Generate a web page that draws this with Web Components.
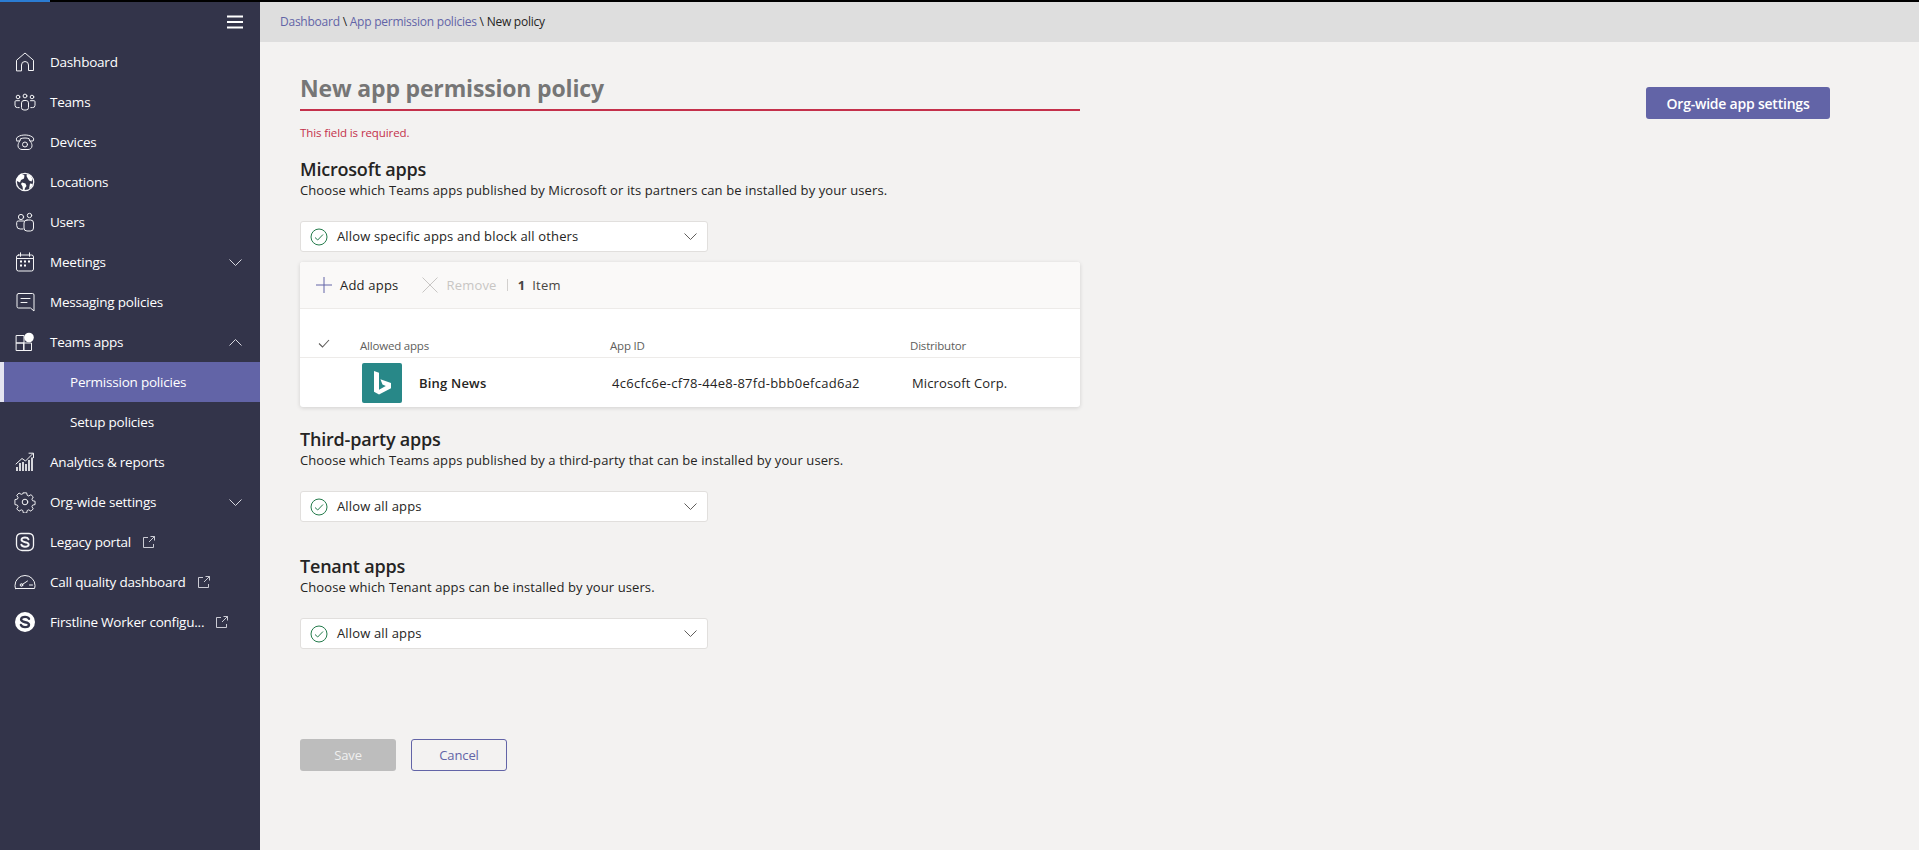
<!DOCTYPE html>
<html lang="en"><head><meta charset="utf-8"><title>New app permission policy</title>
<style>
html,body{margin:0;height:100%;overflow:hidden;background:#f3f2f1}
body{font-family:"Open Sans","Noto Sans",sans-serif;color:#252423}
</style></head><body>
<admin-app>
  <side-nav slot="nav">
    <nav-item label="Dashboard" icon="home"></nav-item>
    <nav-item label="Teams" icon="teams"></nav-item>
    <nav-item label="Devices" icon="phone"></nav-item>
    <nav-item label="Locations" icon="globe"></nav-item>
    <nav-item label="Users" icon="users"></nav-item>
    <nav-item label="Meetings" icon="calendar" chevron="down"></nav-item>
    <nav-item label="Messaging policies" icon="chat"></nav-item>
    <nav-item label="Teams apps" icon="apps" chevron="up"></nav-item>
    <nav-item label="Permission policies" sub active></nav-item>
    <nav-item label="Setup policies" sub></nav-item>
    <nav-item label="Analytics &amp; reports" icon="chart"></nav-item>
    <nav-item label="Org-wide settings" icon="gear" chevron="down"></nav-item>
    <nav-item label="Legacy portal" icon="skype" external></nav-item>
    <nav-item label="Call quality dashboard" icon="gauge" external></nav-item>
    <nav-item label="Firstline Worker configu..." icon="skypefill" external></nav-item>
  </side-nav>
  <bread-crumb slot="crumb"></bread-crumb>
  <policy-form slot="main"></policy-form>
</admin-app>
<script>
const ICONS={
home:'<path d="M1.500 18.500V8.300L10 1l8.500 7.300v10.200h-5v-5.500a3.500 3.500 0 0 0-7 0v5.500z"/>',
teams:'<circle cx="4" cy="4.500" r="1.800"/><circle cx="11" cy="3.500" r="1.900"/><circle cx="18" cy="4.500" r="1.800"/><rect x="7.500" y="8" width="7" height="9.500" rx="2.400"/><path d="M5.500 8.200H2a1 1 0 0 0-1 1v3.600a2.400 2.400 0 0 0 2.600 2.300h1.600M16.500 8.200H20a1 1 0 0 1 1 1v3.600a2.400 2.400 0 0 1-2.600 2.300h-1.600"/>',
phone:'<path d="M1.500 8c-.6-1.500.3-2.500 1.600-3.300C5 3.500 7.500 3 10 3s5 .5 6.900 1.700c1.300.8 2.200 1.800 1.600 3.300l-.4 1h-3.400l-.6-2.300C13 6.200 11.500 6 10 6s-3 .2-4.500.7L4.900 9H1.900z"/><path d="M4.500 9.500c-1 1.300-1.500 2.800-1.500 4.300C3 16.200 5 17.500 7 17.500h6c2 0 4-1.300 4-3.700 0-1.500-.5-3-1.500-4.300"/><circle cx="10" cy="12.500" r="2.500"/>',
globe:'<circle cx="10" cy="10" r="8.700" stroke-width="1.300"/><path fill="#fff" stroke="none" d="M6 1.500 9.500 3.500l-.5 3-3 1.500-1 2.500-3-1.500-.5-1.500C2.500 5 4 2.800 6 1.500zM7 10.500l3.500 1 1 2.500-1.500 2-.5 2.500-1.500-.5-.5-3.500-1.500-2.500zM12 2l3.500 1.500 2 3.500-1 2.500-2.500-1-1.500-2.500-1-2zM15 11.500l2.800.5-1.300 3-2.500 2z"/>',
users:'<circle cx="6" cy="5" r="2.600"/><circle cx="14.500" cy="3.500" r="2.200"/><path d="M9 9H3.200a1.500 1.500 0 0 0-1.500 1.500v3A3.500 3.500 0 0 0 5.200 17H8"/><rect x="9" y="8" width="9.500" height="11" rx="3"/>',
calendar:'<rect x="1.500" y="3" width="17" height="16" rx="2"/><path d="M5.500 .8v3.500M14.500 .8v3.500M1.500 6.500h17"/><g fill="#fff" stroke="none"><rect x="5" y="8.500" width="2" height="2"/><rect x="9" y="8.500" width="2" height="2"/><rect x="13" y="8.500" width="2" height="2"/><rect x="5" y="12.500" width="2" height="2"/><rect x="9" y="12.500" width="2" height="2"/></g>',
chat:'<path d="M3.500 1.500h14A1.500 1.500 0 0 1 19 3v16l-3.500-3H3.500A1.500 1.500 0 0 1 2 14.500V3a1.500 1.500 0 0 1 1.500-1.500z"/><path d="M6 6.500h9M6 10.500h6"/>',
apps:'<path d="M1.500 3.500h7.500v7.500H1.500zM1.500 11h7.500v7.500H1.500zM9 11h7.500v7.500H9z"/><circle cx="14" cy="5.500" r="4.800" fill="#fff" stroke="none"/>',
chart:'<path d="M1 12 7 6.500l3.500 2.500L18 1.500M14 1.200h4.500v4.500"/><path d="M2 19v-4M5 19v-8M8 19v-9M11 19v-7M14 19V8M17 19V5.500" stroke-width="1.700" stroke-linecap="butt"/>',
gear:'<path d="M8.300 1.500h3.400l.6 2.600 1.600.7 2.300-1.400 2.400 2.400-1.400 2.300.7 1.600 2.600.6v3.400l-2.600.6-.7 1.600 1.400 2.300-2.400 2.400-2.300-1.400-1.600.7-.6 2.600H8.300l-.6-2.600-1.600-.7-2.300 1.400-2.400-2.400 1.400-2.300-.7-1.600-2.600-.6V8.600l2.600-.6.700-1.600-1.400-2.300 2.400-2.400 2.300 1.400 1.600-.7z" transform="translate(.4 -.6) scale(.96)"/><circle cx="10" cy="10" r="2.800"/>',
skype:'<path d="M6 1.500h8A4.800 4.800 0 0 1 18.500 6v7.500a5 5 0 0 1-5 5H7A5.500 5.500 0 0 1 1.500 13V6A4.800 4.800 0 0 1 6 1.500z" stroke-width="1.300"/><path d="M13.500 7.300C13 6 11.700 5.500 10 5.500c-2 0-3.500.9-3.500 2.300 0 3.300 7.200 1.600 7.200 4.700 0 1.300-1.500 2.200-3.700 2.200-1.900 0-3.200-.7-3.700-2" stroke-width="1.900"/>',
gauge:'<path d="M1.500 15.500h19c.3-1 .5-2 .5-3a10 10 0 0 0-20 0c0 1 .2 2 .5 3z"/><path d="M7.500 12l6-4"/><circle cx="7.500" cy="12" r="1.300"/><path d="M15.500 12h3"/>',
skypefill:'<circle cx="10" cy="10" r="10" fill="#fff" stroke="none"/><path d="M14 6.800C13.400 5.400 12 4.900 10 4.900c-2.300 0-3.900 1-3.900 2.700 0 3.600 7.900 1.800 7.900 5.100 0 1.500-1.700 2.400-4 2.400-2.100 0-3.600-.8-4.100-2.200" stroke="#33344a" stroke-width="2.400"/>'
};
const VIEW={teams:'0 -1.500 22 22',gauge:'0 -2 22 22'};
const tpl=(html)=>{const t=document.createElement('template');t.innerHTML=html;return t};
const define=(name,html)=>{const t=tpl(html);customElements.define(name,class extends HTMLElement{
  connectedCallback(){if(this.shadowRoot)return;this.attachShadow({mode:'open'}).appendChild(t.content.cloneNode(true))}
})};

define('admin-app',`<style>
:host{display:grid;grid-template-columns:260px 1fr;grid-template-rows:2px 40px 1fr;height:850px;background:#f3f2f1}
.top{grid-column:1/3;background:#000;display:flex}.top i{width:50px;background:#2b7cd3}
.nav{grid-row:2/4;background:#33344a;min-width:0}
.crumb{background:#dedede;min-width:0}
.main{min-width:0;overflow:hidden}
</style><div class="top"><i></i></div><div class="nav"><slot name="nav"></slot></div><div class="crumb"><slot name="crumb"></slot></div><div class="main"><slot name="main"></slot></div>`);

define('side-nav',`<style>
:host{display:block}
.burger{height:40px;display:flex;justify-content:flex-end;align-items:center;padding-right:17px}
svg{display:block}
</style><div class="burger"><svg width="16" height="14" viewBox="0 0 16 14" aria-label="Menu"><path d="M0 1.500h16M0 7h16M0 12.500h16" stroke="#fff" stroke-width="2"/></svg></div><slot></slot>`);

customElements.define('nav-item',class extends HTMLElement{
  connectedCallback(){
    if(this.shadowRoot)return;
    const r=this.attachShadow({mode:'open'});
    const a=n=>this.getAttribute(n);
    const ic=a('icon');
    const chev=a('chevron');
    r.innerHTML=`<style>
:host{display:flex;align-items:center;height:40px;box-sizing:border-box;color:#fff;font:13.500px/20px "Open Sans","Noto Sans",sans-serif;letter-spacing:-.22px;white-space:nowrap}
:host([sub]){padding-left:70px}
:host([active]){background:#6264a7;box-shadow:inset 4px 0 0 #e4e4f1}
.ic{width:50px;padding-left:14px;box-sizing:border-box;flex:none;display:flex}
.ic svg{display:block}
.ext{margin-left:12px;display:block}
.ch{margin-left:auto;margin-right:18px;display:block}
</style>${ic?`<span class="ic"><svg width="22" height="22" viewBox="${VIEW[ic]||'-1 -1 22 22'}" fill="none" stroke="#f4f4f6" stroke-width="1" stroke-linejoin="round" stroke-linecap="round">${ICONS[ic]}</svg></span>`:''}<span>${a('label').replace(/&/g,'&amp;')}</span>${a('external')!==null?'<svg class="ext" width="12" height="12" viewBox="0 0 12 12" fill="none" stroke="#dcdce4" stroke-width=".9"><path d="M5 1.500H.5v10h10V8M6 6l5.500-5.500M7.500.5h4v4"/></svg>':''}${chev?`<svg class="ch" width="13" height="7" viewBox="0 0 13 7" fill="none" stroke="#d8d8e0" stroke-width="1"><path d="${chev==='down'?'M.5.500l6 6 6-6':'M.5 6.500l6-6 6 6'}"/></svg>`:''}`;
  }
});

define('bread-crumb',`<style>
:host{display:flex;align-items:center;height:100%;padding-left:20px;font:12px/16px "Open Sans","Noto Sans",sans-serif;letter-spacing:-.24px;color:#252423;white-space:pre}
a{color:#6264a7}
</style><a>Dashboard</a> \\ <a>App permission policies</a> \\ New policy`);

define('pick-list',`<style>
:host{display:flex;align-items:center;width:408px;height:31px;box-sizing:border-box;background:#fff;border:1px solid #e1dfdd;border-radius:3px;padding:0 10px 0 9px;font:13px/18px "Open Sans","Noto Sans",sans-serif;letter-spacing:.15px;color:#252423}
svg{display:block;flex:none}
span{margin:0 0 2px 9px;flex:1}
</style><svg width="18" height="18" viewBox="0 0 18 18" fill="none" stroke="#237b4b" stroke-width="1"><circle cx="9" cy="9" r="8"/><path d="M5 9.500l2.700 2.500L13 6.500"/></svg><span><slot></slot></span><svg width="13" height="7" viewBox="0 0 13 7" fill="none" stroke="#605e5c" stroke-width="1"><path d="M.5.500l6 6 6-6"/></svg>`);

define('policy-section',`<style>
:host{display:block;font-family:"Open Sans","Noto Sans",sans-serif}
h2{margin:0;font-size:18px;line-height:24px;font-weight:600;letter-spacing:-.2px;color:#252423}
p{margin:0;font-size:13px;line-height:18px;letter-spacing:.1px;color:#252423}
.b{margin-top:22px}
</style><h2><slot name="h"></slot></h2><p><slot name="d"></slot></p><div class="b"><slot></slot></div>`);

define('apps-table',`<style>
:host{display:block;width:780px;margin-top:10px;background:#fff;border-radius:3px;box-shadow:0 1px 4px rgba(0,0,0,.14);font:13px/18px "Open Sans","Noto Sans",sans-serif;letter-spacing:.2px;color:#252423}
.bar{height:47px;box-sizing:border-box;background:#faf9f8;border-bottom:1px solid #edebe9;border-radius:3px 3px 0 0;display:flex;align-items:center;padding-left:16px}
.bar svg{display:block;flex:none}
.add{margin-left:8px}.rem{margin-left:8px;color:#c8c6c4}.sep{width:1px;height:12px;background:#d2d0ce;margin:0 10px}
.x{margin-left:24px}
.count{color:#484644;display:flex;gap:7px}.count b{font-weight:700}
.row{display:grid;grid-template-columns:60px 250px 300px 1fr;align-items:center}
.head{height:49px;box-sizing:border-box;padding-bottom:1px;align-items:end;border-bottom:1px solid #edebe9;font-size:11.500px;line-height:20px;letter-spacing:-.2px;color:#605e5c}
.head svg{display:block;margin:0 0 8px 18px}
.body{height:49px}
.tile{grid-column:2;display:flex;align-items:center;gap:17px;font-weight:600;margin-left:2px}
.tile svg{display:block;flex:none}
.id{padding-left:2px;letter-spacing:.27px}.ms{padding-left:2px;letter-spacing:.13px}
</style><div class="bar"><svg width="16" height="16" viewBox="0 0 16 16" fill="none" stroke="#6264a7" stroke-width="1"><path d="M0 8h16M8 0v16"/></svg><span class="add">Add apps</span><svg class="x" width="16" height="16" viewBox="0 0 16 16" fill="none" stroke="#c8c6c4" stroke-width="1"><path d="M.5.500l15 15M15.500.500l-15 15"/></svg><span class="rem">Remove</span><i class="sep"></i><span class="count"><b>1</b><span>Item</span></span></div>
<div class="row head"><svg width="12" height="9" viewBox="0 0 12 9" fill="none" stroke="#605e5c" stroke-width="1.100"><path d="M1 4.500l3.500 3.500L11 1"/></svg><span>Allowed apps</span><span>App ID</span><span>Distributor</span></div>
<div class="row body"><span class="tile"><svg width="40" height="40" viewBox="0 0 40 40"><rect width="40" height="40" rx="2" fill="#288888"/><path fill="#fff" d="M12 8l5 1.800v17l6.800-3.900-3.300-1.500-2.100-5.200 10.600 3.700v5.400L17 31.500l-5-2.800z"/></svg>Bing News</span><span class="id">4c6cfc6e-cf78-44e8-87fd-bbb0efcad6a2</span><span class="ms">Microsoft Corp.</span></div>`);

define('policy-form',`<style>
:host{display:block;padding:0 40px;font-family:"Open Sans","Noto Sans",sans-serif;height:808px;box-sizing:border-box}
.head{display:flex;justify-content:space-between;align-items:flex-start;padding-top:25px;padding-right:49px}
.title{width:780px;height:44px;box-sizing:border-box;border-bottom:2px solid #c4314b;font-size:23px;line-height:42px;font-weight:700;letter-spacing:-.17px;color:#767676}
.org{width:184px;height:32px;margin-top:20px;background:#6264a7;color:#fff;border-radius:3px;font-size:14px;font-weight:600;letter-spacing:-.22px;display:flex;align-items:center;justify-content:center}
.err{margin-top:6px;font-size:11.500px;line-height:16px;letter-spacing:-.1px;color:#c4314b}
.s1{margin-top:16px}.s2{margin-top:20px}.s3{margin-top:32px}
.btns{display:flex;gap:15px;margin-top:90px}
.btns span{width:96px;height:32px;box-sizing:border-box;border-radius:3px;display:flex;align-items:center;justify-content:center;font-size:13px;letter-spacing:-.1px}
.save{background:#bdbdbd;color:#f0f0f0}.cancel{border:1px solid #6264a7;color:#6264a7}
</style><div class="head"><div class="title">New app permission policy</div><div class="org">Org-wide app settings</div></div>
<div class="err">This field is required.</div>
<policy-section class="s1"><span slot="h">Microsoft apps</span><span slot="d">Choose which Teams apps published by Microsoft or its partners can be installed by your users.</span><pick-list>Allow specific apps and block all others</pick-list><apps-table></apps-table></policy-section>
<policy-section class="s2"><span slot="h">Third-party apps</span><span slot="d">Choose which Teams apps published by a third-party that can be installed by your users.</span><pick-list>Allow all apps</pick-list></policy-section>
<policy-section class="s3"><span slot="h">Tenant apps</span><span slot="d">Choose which Tenant apps can be installed by your users.</span><pick-list>Allow all apps</pick-list></policy-section>
<div class="btns"><span class="save">Save</span><span class="cancel">Cancel</span></div>`);
</script>
</body></html>
